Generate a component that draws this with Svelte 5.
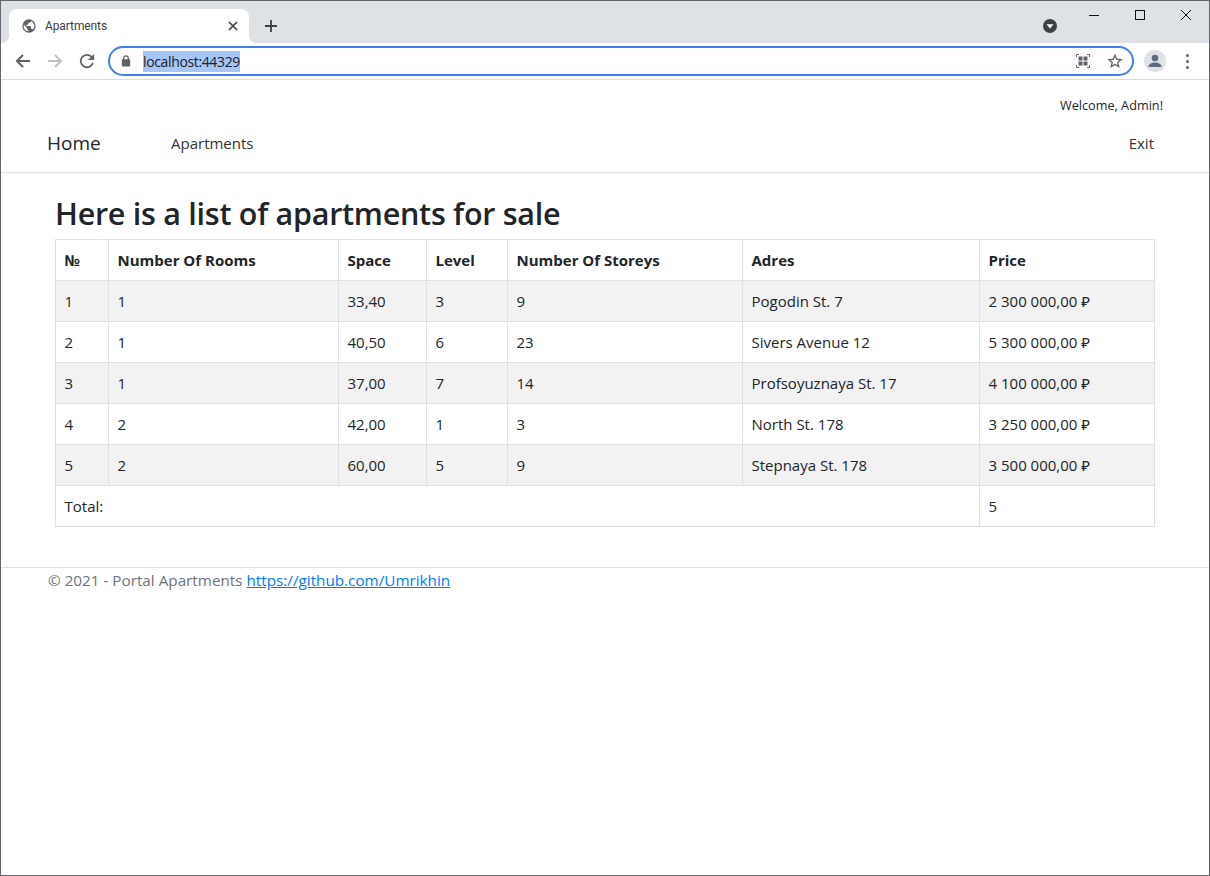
<script>
  const apartments = [
    { id: 1, rooms: 1, space: '33,40', level: 3, storeys: 9, adres: 'Pogodin St. 7', price: '2 300 000,00 ₽' },
    { id: 2, rooms: 1, space: '40,50', level: 6, storeys: 23, adres: 'Sivers Avenue 12', price: '5 300 000,00 ₽' },
    { id: 3, rooms: 1, space: '37,00', level: 7, storeys: 14, adres: 'Profsoyuznaya St. 17', price: '4 100 000,00 ₽' },
    { id: 4, rooms: 2, space: '42,00', level: 1, storeys: 3, adres: 'North St. 178', price: '3 250 000,00 ₽' },
    { id: 5, rooms: 2, space: '60,00', level: 5, storeys: 9, adres: 'Stepnaya St. 178', price: '3 500 000,00 ₽' }
  ];
  const colWidths = [53, 230, 88, 81, 235, 237, 175];
</script>

<div class="window">
  <div class="tabstrip">
    <div class="tab">
      <svg class="favicon" width="16" height="16" viewBox="0 0 24 24"><path fill="#5f6368" d="M12 2a10 10 0 1 0 0 20 10 10 0 0 0 0-20zM4 12c0-.6.1-1.200.2-1.800L9 15v1c0 1.100.9 2 2 2v2a8 8 0 0 1-7-8zm13.900 5.400c-.3-.8-1-1.400-1.900-1.400h-1v-3c0-.6-.4-1-1-1H8v-2h2c.6 0 1-.4 1-1V7h2c1.100 0 2-.9 2-2v-.4a8 8 0 0 1 2.900 12.800z"/></svg>
      <span class="tab-title">Apartments</span>
      <svg class="tab-close" width="10" height="10" viewBox="0 0 10 10"><path d="M1 1l8 8M9 1l-8 8" stroke="#3c4043" stroke-width="1.700"/></svg>
    </div>
    <svg class="newtab" width="12" height="12" viewBox="0 0 12 12"><path d="M6 0v12M0 6h12" stroke="#3c4043" stroke-width="1.800"/></svg>
    <svg class="profile-dd" width="16" height="16" viewBox="0 0 16 16"><circle cx="8" cy="8" r="7" fill="#3c4043"/><path d="M4.500 6.200h7L8 10.500z" fill="#fff"/></svg>
    <div class="winctl">
      <svg width="12" height="12" viewBox="0 0 12 12"><path d="M1 6.500h10" stroke="#111" stroke-width="1"/></svg>
      <svg width="12" height="12" viewBox="0 0 12 12"><rect x="1.500" y="1.500" width="9" height="9" fill="none" stroke="#111" stroke-width="1"/></svg>
      <svg width="12" height="12" viewBox="0 0 12 12"><path d="M1 1l10 10M11 1L1 11" stroke="#111" stroke-width="1"/></svg>
    </div>
  </div>

  <div class="toolbar">
    <svg class="nav-ic" width="16" height="16" viewBox="0 0 16 16"><path d="M15 8H2M8 2L2 8l6 6" fill="none" stroke="#5f6368" stroke-width="2"/></svg>
    <svg class="nav-ic" width="16" height="16" viewBox="0 0 16 16"><path d="M1 8h13M8 2l6 6-6 6" fill="none" stroke="#bdc1c6" stroke-width="2"/></svg>
    <svg class="nav-ic" width="16" height="16" viewBox="3 3 18 18"><path fill="#5f6368" d="M17.650 6.350A8 8 0 1 0 19.730 14h-2.080a6 6 0 1 1-1.410-6.240L13 11h7V4z"/></svg>
    <div class="omnibox">
      <svg class="lock" width="10" height="12" viewBox="0 0 12 14"><path fill="#5f6368" d="M10 5H9.500V3.500a3.500 3.500 0 0 0-7 0V5H2a1 1 0 0 0-1 1v6.500a1 1 0 0 0 1 1h8a1 1 0 0 0 1-1V6a1 1 0 0 0-1-1zM4 5V3.500a2 2 0 0 1 4 0V5z"/></svg>
      <span class="url">localhost:44329</span>
      <svg class="qr" width="14" height="14" viewBox="0 0 14 14"><path d="M.5 3V.5H3M11 .5h2.500V3M13.500 11v2.500H11M3 13.500H.5V11" fill="none" stroke="#5f6368"/><rect x="2.500" y="2.500" width="4" height="4" fill="#5f6368"/><rect x="7.500" y="2.500" width="4" height="4" fill="#5f6368"/><rect x="2.500" y="7.500" width="4" height="4" fill="#5f6368"/><rect x="7.500" y="7.500" width="4" height="4" fill="#5f6368"/></svg>
      <svg class="star" width="16" height="16" viewBox="0 0 24 24"><path d="M12 3.500l2.600 5.900 6.400.6-4.800 4.200 1.400 6.300L12 17.200l-5.600 3.300 1.400-6.300L3 10l6.400-.6z" fill="none" stroke="#5f6368" stroke-width="2"/></svg>
    </div>
    <div class="avatar">
      <svg width="16" height="16" viewBox="0 0 16 16"><circle cx="8" cy="5" r="3.300" fill="#5f6b80"/><path d="M1.500 14c0-3 3-4.500 6.500-4.500s6.500 1.500 6.500 4.500z" fill="#5f6b80"/></svg>
    </div>
    <div class="menu-dots"><i></i><i></i><i></i></div>
  </div>

  <header class="site-header">
    <div class="welcome">Welcome, Admin!</div>
    <nav class="navbar">
      <a class="brand" href="#home">Home</a>
      <a class="nav-link" href="#apartments">Apartments</a>
      <a class="nav-link exit" href="#exit">Exit</a>
    </nav>
  </header>

  <main class="content">
    <h1>Here is a list of apartments for sale</h1>
    <table>
      <colgroup>
        {#each colWidths as w}
          <col width={w} />
        {/each}
      </colgroup>
      <thead>
        <tr>
          <th>№</th>
          <th>Number Of Rooms</th>
          <th>Space</th>
          <th>Level</th>
          <th>Number Of Storeys</th>
          <th>Adres</th>
          <th>Price</th>
        </tr>
      </thead>
      <tbody>
        {#each apartments as a}
          <tr>
            <td>{a.id}</td>
            <td>{a.rooms}</td>
            <td>{a.space}</td>
            <td>{a.level}</td>
            <td>{a.storeys}</td>
            <td>{a.adres}</td>
            <td>{a.price}</td>
          </tr>
        {/each}
        <tr>
          <td colspan="6">Total:</td>
          <td>{apartments.length}</td>
        </tr>
      </tbody>
    </table>
  </main>

  <footer class="site-footer">
    © 2021 - Portal Apartments <a href="#github">https://github.com/Umrikhin</a>
  </footer>
</div>

<style>
  :global(body) { background: #fff; }
  .window {
    height: 876px;
    box-sizing: border-box;
    border: 1px solid #63666a;
    overflow: hidden;
    font-family: "Open Sans", "Noto Sans", sans-serif;
    color: #212529;
    background: #fff;
  }
  .tabstrip {
    position: relative;
    height: 42px;
    background: #dee1e6;
    display: flex;
    align-items: flex-end;
    padding-left: 8px;
  }
  .tab {
    position: relative;
    width: 240px;
    height: 34px;
    box-sizing: border-box;
    background: #fff;
    border-radius: 8px 8px 0 0;
    display: flex;
    align-items: center;
    padding: 0 11px 0 12px;
  }
  .tab::before, .tab::after {
    content: '';
    position: absolute;
    bottom: 0;
    width: 8px;
    height: 8px;
  }
  .tab::before { left: -8px; background: radial-gradient(circle at 0 0, transparent 8px, #fff 8.500px); }
  .tab::after { right: -8px; background: radial-gradient(circle at 100% 0, transparent 8px, #fff 8.500px); }
  .favicon { flex: none; }
  .tab-title {
    flex: 1;
    margin-left: 8px;
    font: 12px Roboto, sans-serif;
    letter-spacing: -0.1px;
    color: #3c4043;
  }
  .newtab { position: absolute; left: 264px; top: 19px; }
  .profile-dd { position: absolute; left: 1041px; top: 17px; }
  .winctl {
    position: absolute;
    right: 17px;
    top: 8px;
    display: flex;
    gap: 34px;
  }
  .toolbar {
    height: 37px;
    box-sizing: border-box;
    border-bottom: 1px solid #dadce0;
    display: flex;
    align-items: center;
    padding-left: 14px;
    padding-right: 15px;
  }
  .nav-ic { flex: none; margin-right: 16px; }
  .omnibox {
    flex: none;
    width: 1026px;
    height: 30px;
    margin-left: -3px;
    box-sizing: border-box;
    border: 2px solid #4080e8;
    border-radius: 15px;
    display: flex;
    align-items: center;
    padding-left: 11px;
  }
  .url {
    margin-left: 12px;
    padding: 2px 0;
    width: 97px;
    font: 14px/17px "Open Sans", sans-serif;
    letter-spacing: -0.36px;
    background: #a5c6f7;
    color: #202124;
    white-space: nowrap;
  }
  .qr { margin-left: auto; }
  .star { margin-left: 17px; margin-right: 9px; }
  .avatar {
    flex: none;
    width: 22px;
    height: 22px;
    margin-left: 10px;
    border-radius: 50%;
    background: #dee1e6;
    display: flex;
    align-items: flex-end;
    justify-content: center;
  }
  .avatar svg { margin-bottom: 3px; }
  .menu-dots {
    display: flex;
    flex-direction: column;
    gap: 3px;
    margin-left: 20px;
  }
  .menu-dots i {
    width: 3px;
    height: 3px;
    border-radius: 50%;
    background: #5f6368;
  }
  .site-header {
    height: 93px;
    box-sizing: border-box;
    border-bottom: 1px solid #dee2e6;
    padding: 16px 46px 0;
  }
  .welcome {
    text-align: right;
    font-size: 12.700px;
    line-height: 18px;
  }
  .navbar {
    display: flex;
    align-items: center;
    margin-top: 11px;
    height: 36px;
  }
  a { text-decoration: none; color: inherit; }
  .brand {
    font-size: 19px;
    width: 124px;
    color: #212529;
  }
  .nav-link {
    font-size: 15px;
    color: #333;
  }
  .exit { margin-left: auto; margin-right: 9px; }
  .content { padding: 0 54px; }
  h1 {
    margin: 20px 0 0;
    height: 46px;
    font-size: 30.500px;
    line-height: 40px;
    font-weight: 600;
    letter-spacing: -0.27px;
    color: #212529;
  }
  table {
    width: 1100px;
    table-layout: fixed;
    border-collapse: collapse;
    font-size: 15px;
  }
  th, td {
    height: 41px;
    box-sizing: border-box;
    padding: 0 8px 0 8.500px;
    border: 1px solid #dee2e6;
    text-align: left;
    vertical-align: middle;
    white-space: nowrap;
    color: #212529;
  }
  th { font-weight: 700; }
  tbody tr:nth-child(odd) { background: #f2f2f2; }
  tbody tr:last-child { background: #fff; }
  .site-footer {
    margin-top: 40px;
    border-top: 1px solid #dee2e6;
    padding: 1px 47px;
    font-size: 15.250px;
    line-height: 22px;
    color: #6c757d;
  }
  .site-footer a { color: #007bff; text-decoration: underline; }
</style>
